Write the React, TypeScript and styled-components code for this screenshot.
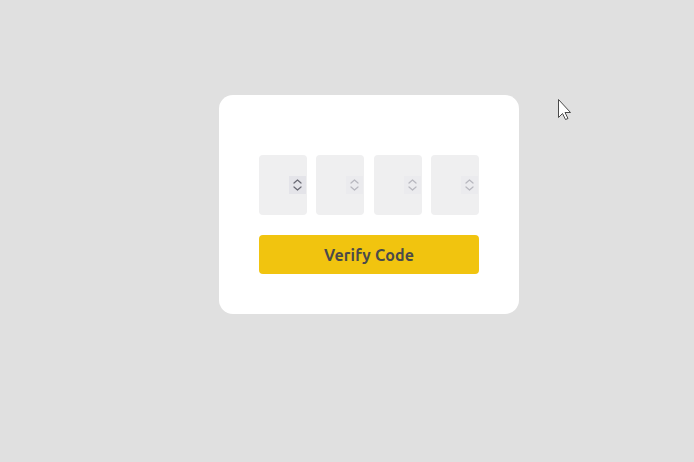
import React from "react";
import styled, { createGlobalStyle } from "styled-components";

const Global = createGlobalStyle`
  html, body { margin: 0; padding: 0; background: #e0e0e0; }
  body { font-family: "Ubuntu", "Open Sans", "Noto Sans", sans-serif; }
`;

const Page = styled.div`
  position: relative;
  width: 694px;
  height: 462px;
  box-sizing: border-box;
  padding: 95px 0 0 219px;
`;

const Card = styled.form`
  width: 300px;
  box-sizing: border-box;
  background: #ffffff;
  border-radius: 14px;
  padding: 60px 40px 40px;
  display: flex;
  flex-direction: column;
  gap: 20px;
`;

const Digits = styled.div`
  display: flex;
  justify-content: space-between;
`;

const DigitWrap = styled.div`
  position: relative;
  width: 48px;
  height: 60px;
`;

const DigitInput = styled.input`
  width: 100%;
  height: 100%;
  box-sizing: border-box;
  border: none;
  outline: none;
  border-radius: 4px;
  background: #efeff0;
  font-family: inherit;
  font-size: 20px;
  text-align: center;
  color: #444;
  padding: 0;
`;

const Spinner = styled.div<{ $active?: boolean }>`
  position: absolute;
  top: 21px;
  right: 1px;
  width: 17px;
  height: 18px;
  background: ${(p) => (p.$active ? "#e4e4e9" : "#ebebee")};
  display: flex;
  align-items: center;
  justify-content: center;
  pointer-events: none;
  color: ${(p) => (p.$active ? "#6b6b75" : "#b8b8bf")};
`;

const Button = styled.button`
  height: 39px;
  border: none;
  border-radius: 4px;
  background: #f1c40f;
  color: #4a4a4a;
  font-family: inherit;
  font-weight: 700;
  font-size: 16px;
  letter-spacing: 0.15px;
  cursor: pointer;
  padding: 0;
`;

const Cursor = styled.svg`
  position: absolute;
  left: 556px;
  top: 97px;
`;

function SpinIcon() {
  return (
    <svg width="11" height="14" viewBox="0 0 11 14" fill="none">
      <path d="M2 5 L5.5 2 L9 5" stroke="currentColor" strokeWidth="1.25" strokeLinecap="round" strokeLinejoin="round" />
      <path d="M2 9 L5.5 12 L9 9" stroke="currentColor" strokeWidth="1.25" strokeLinecap="round" strokeLinejoin="round" />
    </svg>
  );
}

export default function App() {
  const digits = [0, 1, 2, 3];
  return (
    <>
      <Global />
      <Page>
        <Card onSubmit={(e) => e.preventDefault()}>
          <Digits>
            {digits.map((i) => (
              <DigitWrap key={i}>
                <DigitInput type="text" inputMode="numeric" maxLength={1} aria-label={`Digit ${i + 1}`} />
                <Spinner $active={i === 0}>
                  <SpinIcon />
                </Spinner>
              </DigitWrap>
            ))}
          </Digits>
          <Button type="submit">Verify Code</Button>
        </Card>
        <Cursor width="18" height="26" viewBox="0 0 18 26">
          <path
            d="M2.5 2.5 L2.5 20.5 L6.5 16.5 L9.5 22.5 L12 21.5 L9 15.5 L14.5 15.5 Z"
            fill="#ffffff"
            stroke="#4a4a4a"
            strokeWidth="1"
            strokeLinejoin="round"
          />
        </Cursor>
      </Page>
    </>
  );
}
